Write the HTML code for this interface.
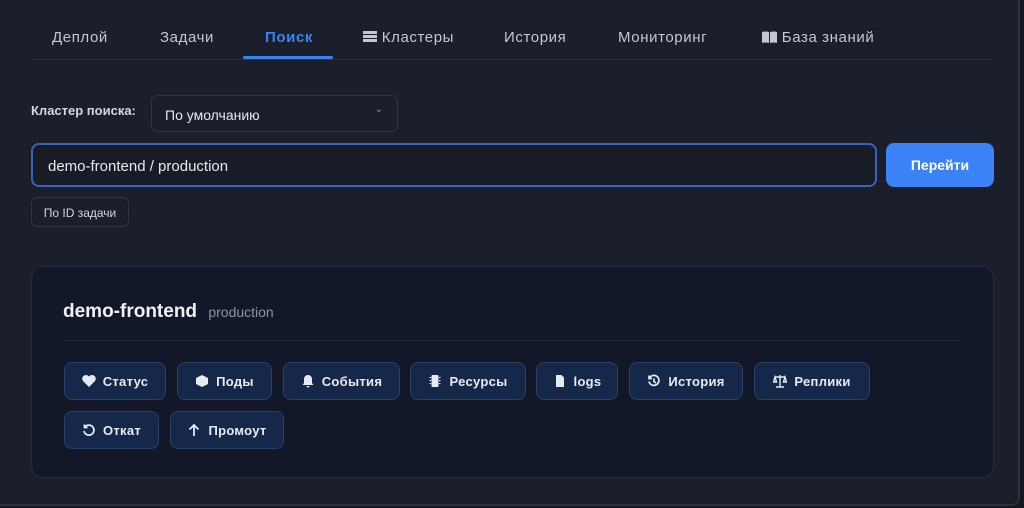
<!DOCTYPE html><html><head><meta charset="utf-8"><style>
*{box-sizing:border-box;margin:0;padding:0}
body{width:1024px;height:508px;background:#15181f;font-family:"Liberation Sans",sans-serif;overflow:hidden;position:relative}
.panel{position:absolute;left:0;top:0;width:1020px;height:506px;background:#1a1f2b;border-right:2px solid #2a303c;border-bottom:2px solid #2a303c;border-radius:0 0 8px 0}
.tab{position:absolute;top:29px;font-size:15px;color:#c4c8d0;letter-spacing:0.6px}
.ab{position:absolute}
.btn{position:absolute;height:38px;background:#16284a;border:1px solid #2a4068;border-radius:8px;color:#e6ebf3;font-weight:bold;font-size:13px;display:flex;align-items:center;justify-content:center;gap:7px;letter-spacing:0.3px}
.btn svg{width:14px;height:14px;fill:#e6ebf3}
</style></head><body><div class="panel">
<div class="tab" style="left:52px">Деплой</div>
<div class="tab" style="left:160px">Задачи</div>
<div class="tab" style="left:265px;color:#3b82f6;font-weight:bold">Поиск</div>
<div class="tab" style="left:363px"><span style="display:inline-block;width:14px;height:12px;background:repeating-linear-gradient(#c4c8d0 0 3px,#1a1f2b 3px 4px);vertical-align:-1px"></span> Кластеры</div>
<div class="tab" style="left:504px">История</div>
<div class="tab" style="left:618px">Мониторинг</div>
<div class="tab" style="left:762px"><svg width="15" height="12" viewBox="0 0 15 12" style="vertical-align:-1px"><path d="M0 1Q3 0 7 1V12Q3 11 0 12Z M8 1Q12 0 15 1V12Q12 11 8 12Z" fill="#c4c8d0"/></svg> База знаний</div>
<div class="ab" style="left:31px;top:59px;width:962px;height:1px;background:#2a303c"></div>
<div class="ab" style="left:243px;top:56px;width:90px;height:3px;background:#3b82f6;border-radius:2px"></div>
<div class="ab" style="left:31px;top:103px;font-size:13px;font-weight:bold;color:#d4d8df">Кластер поиска:</div>
<div class="ab" style="left:151px;top:95px;width:247px;height:37px;border:1px solid #2e3442;border-radius:6px;background:#1a1f2b;color:#e6e9ee;font-size:14px;padding:11px 13px">По умолчанию<span style="position:absolute;right:14px;top:8px;font-size:10px;color:#8a909c">⌄</span></div>
<div class="ab" style="left:31px;top:143px;width:846px;height:44px;border:2px solid #3a64b8;border-radius:8px;background:#181c27;color:#e6e9ee;font-size:15px;padding:13px 15px 0">demo-frontend / production</div>
<div class="ab" style="left:886px;top:143px;width:108px;height:44px;background:#3b82f6;border-radius:8px;color:#fff;font-weight:bold;font-size:14px;text-align:center;line-height:44px">Перейти</div>
<div class="ab" style="left:31px;top:197px;width:98px;height:30px;border:1px solid #2e3442;border-radius:6px;color:#d4d8df;font-size:12px;text-align:center;line-height:30px">По ID задачи</div>
<div class="ab" style="left:31px;top:266px;width:963px;height:212px;background:#121827;border:1px solid #252c3a;border-radius:12px"></div>
<div class="ab" style="left:63px;top:301px;font-size:19px;font-weight:bold;color:#eef1f5">demo-frontend <span style="font-size:14px;font-weight:normal;color:#8d95a3;margin-left:6px">production</span></div>
<div class="ab" style="left:63px;top:340px;width:898px;height:1px;background:#232a38"></div>
<div class="btn" style="left:64px;top:362px;width:102px"><svg viewBox="0 0 14 14"><path d="M7 13L1 7A3.3 3.3 0 0 1 7 2.5A3.3 3.3 0 0 1 13 7Z"/></svg>Статус</div>
<div class="btn" style="left:177px;top:362px;width:95px"><svg viewBox="0 0 14 14"><path d="M7 1L13 4V10L7 13L1 10V4Z"/></svg>Поды</div>
<div class="btn" style="left:283px;top:362px;width:117px"><svg viewBox="0 0 14 14"><path d="M7 1A4 4 0 0 1 11 5V9L12.5 11H1.5L3 9V5A4 4 0 0 1 7 1ZM5.5 12H8.5A1.5 1.5 0 0 1 5.5 12Z"/></svg>События</div>
<div class="btn" style="left:410px;top:362px;width:116px"><svg viewBox="0 0 14 14"><rect x="3.5" y="1" width="7" height="12" rx="1"/><path d="M1.5 3h1.5v1H1.5zM1.5 6h1.5v1H1.5zM1.5 9h1.5v1H1.5zM11 3h1.5v1H11zM11 6h1.5v1H11zM11 9h1.5v1H11z"/></svg>Ресурсы</div>
<div class="btn" style="left:536px;top:362px;width:82px"><svg viewBox="0 0 14 14"><path d="M3 1H8.5L11 3.5V13H3Z"/></svg>logs</div>
<div class="btn" style="left:629px;top:362px;width:114px"><svg viewBox="0 0 14 14" style="fill:none;stroke:#e6ebf3;stroke-width:1.7"><path d="M2.5 4A5 5 0 1 1 2 7.5M2 1.5V4.5H5M7 4.5V7.5L9 9"/></svg>История</div>
<div class="btn" style="left:754px;top:362px;width:116px"><svg viewBox="0 0 14 14" style="fill:none;stroke:#e6ebf3;stroke-width:1.4"><path d="M7 1V13M3 13H11M2 3H12M2 3L0.5 8H3.5ZM12 3L10.5 8H13.5Z"/></svg>Реплики</div>
<div class="btn" style="left:64px;top:411px;width:95px"><svg viewBox="0 0 14 14" style="fill:none;stroke:#e6ebf3;stroke-width:1.8"><path d="M3 4A5 5 0 1 1 2 8M2.5 1.5V4.5H5.5"/></svg>Откат</div>
<div class="btn" style="left:170px;top:411px;width:114px"><svg viewBox="0 0 14 14" style="fill:none;stroke:#e6ebf3;stroke-width:1.8"><path d="M7 13V2M2.5 6.5L7 2L11.5 6.5"/></svg>Промоут</div>
</div></body></html>
